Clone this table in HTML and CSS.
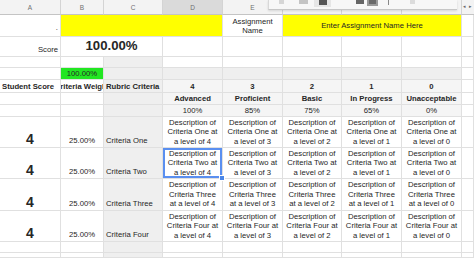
FILE: index.html
```html
<!DOCTYPE html>
<html>
<head>
<meta charset="utf-8">
<link rel="stylesheet" href="styles.css">
</head>
<body>
<div class="sheet">
  <!-- header row -->
  <div class="c hd">A</div>
  <div class="c hd">B</div>
  <div class="c hd">C</div>
  <div class="c hd sel">D</div>
  <div class="c hd">E</div>
  <div class="c hd">F</div>
  <div class="c hd">G</div>
  <div class="c hd">H</div>
  <div class="c hd arrows">◂ ▸</div>

  <!-- row 1 -->
  <div class="c rt mid dot">.</div>
  <div class="c yellow span3"></div>
  <div class="c ctr mid wrap two">Assignment Name</div>
  <div class="c yellow ctr mid span3">Enter Assignment Name Here</div>
  <div class="c"></div>

  <!-- row 2 -->
  <div class="c rt">Score</div>
  <div class="c ctr bold score span2">100.00%</div>
  <div class="c"></div>
  <div class="c"></div>
  <div class="c"></div>
  <div class="c"></div>
  <div class="c"></div>
  <div class="c"></div>

  <!-- row 3 -->
  <div class="c"></div>
  <div class="c"></div>
  <div class="c gray"></div>
  <div class="c"></div>
  <div class="c"></div>
  <div class="c"></div>
  <div class="c"></div>
  <div class="c"></div>
  <div class="c"></div>

  <!-- row 4 -->
  <div class="c"></div>
  <div class="c green ctr mid">100.00%</div>
  <div class="c gray"></div>
  <div class="c gray"></div>
  <div class="c gray"></div>
  <div class="c gray"></div>
  <div class="c gray"></div>
  <div class="c gray"></div>
  <div class="c"></div>

  <!-- row 5 -->
  <div class="c bold mid">Student Score</div>
  <div class="c bold mid ctr clip"><span>Criteria Weight</span></div>
  <div class="c bold mid gray">Rubric Criteria</div>
  <div class="c bold mid ctr light">4</div>
  <div class="c bold mid ctr light">3</div>
  <div class="c bold mid ctr light">2</div>
  <div class="c bold mid ctr light">1</div>
  <div class="c bold mid ctr light">0</div>
  <div class="c"></div>

  <!-- row 6 -->
  <div class="c"></div>
  <div class="c"></div>
  <div class="c gray"></div>
  <div class="c bold mid ctr light">Advanced</div>
  <div class="c bold mid ctr light">Proficient</div>
  <div class="c bold mid ctr light">Basic</div>
  <div class="c bold mid ctr light">In Progress</div>
  <div class="c bold mid ctr light">Unacceptable</div>
  <div class="c"></div>

  <!-- row 7 -->
  <div class="c"></div>
  <div class="c"></div>
  <div class="c gray"></div>
  <div class="c mid ctr light">100%</div>
  <div class="c mid ctr light">85%</div>
  <div class="c mid ctr light">75%</div>
  <div class="c mid ctr light">65%</div>
  <div class="c mid ctr light">0%</div>
  <div class="c"></div>

  <!-- row 8 -->
  <div class="c ctr big">4</div>
  <div class="c ctr">25.00%</div>
  <div class="c gray">Criteria One</div>
  <div class="c desc">Description of Criteria One at a level of 4</div>
  <div class="c desc">Description of Criteria One at a level of 3</div>
  <div class="c desc">Description of Criteria One at a level of 2</div>
  <div class="c desc">Description of Criteria One at a level of 1</div>
  <div class="c desc">Description of Criteria One at a level of 0</div>
  <div class="c"></div>

  <!-- row 9 -->
  <div class="c ctr big">4</div>
  <div class="c ctr">25.00%</div>
  <div class="c gray">Criteria Two</div>
  <div class="c desc active">Description of Criteria Two at a level of 4<span class="handle"></span></div>
  <div class="c desc">Description of Criteria Two at a level of 3</div>
  <div class="c desc">Description of Criteria Two at a level of 2</div>
  <div class="c desc">Description of Criteria Two at a level of 1</div>
  <div class="c desc">Description of Criteria Two at a level of 0</div>
  <div class="c"></div>

  <!-- row 10 -->
  <div class="c ctr big">4</div>
  <div class="c ctr">25.00%</div>
  <div class="c gray">Criteria Three</div>
  <div class="c desc">Description of Criteria Three at a level of 4</div>
  <div class="c desc">Description of Criteria Three at a level of 3</div>
  <div class="c desc">Description of Criteria Three at a level of 2</div>
  <div class="c desc">Description of Criteria Three at a level of 1</div>
  <div class="c desc">Description of Criteria Three at a level of 0</div>
  <div class="c"></div>

  <!-- row 11 -->
  <div class="c ctr big">4</div>
  <div class="c ctr">25.00%</div>
  <div class="c gray">Criteria Four</div>
  <div class="c desc">Description of Criteria Four at a level of 4</div>
  <div class="c desc">Description of Criteria Four at a level of 3</div>
  <div class="c desc">Description of Criteria Four at a level of 2</div>
  <div class="c desc">Description of Criteria Four at a level of 1</div>
  <div class="c desc">Description of Criteria Four at a level of 0</div>
  <div class="c"></div>

  <!-- row 12 -->
  <div class="c"></div>
  <div class="c"></div>
  <div class="c gray"></div>
  <div class="c"></div>
  <div class="c"></div>
  <div class="c"></div>
  <div class="c"></div>
  <div class="c"></div>
  <div class="c"></div>

  <!-- row 13 -->
  <div class="c"></div>
  <div class="c"></div>
  <div class="c gray"></div>
  <div class="c"></div>
  <div class="c"></div>
  <div class="c"></div>
  <div class="c"></div>
  <div class="c"></div>
  <div class="c"></div>

  <div class="toolbar">
    <svg width="188" height="9" viewBox="0 0 188 9">
      <rect x="10" y="0" width="5" height="4" fill="#d6d6d6"/>
      <rect x="30" y="0" width="9" height="4" fill="#c4c4c4"/>
      <rect x="45" y="0" width="17" height="7" fill="#e6e6e6"/>
      <rect x="50" y="0" width="8" height="5" fill="#555"/>
      <rect x="87" y="0" width="8" height="4" fill="#666"/>
      <rect x="98" y="0" width="11" height="6" fill="#9a9a9a"/>
      <rect x="100" y="0" width="7" height="4" fill="#6a6a6a"/>
      <rect x="119" y="0" width="1" height="5" fill="#888"/>
      <rect x="141" y="0" width="5" height="4" fill="#dcdcdc"/>
    </svg>
  </div>
</div>
</body>
</html>
```

FILE: styles.css
```css
html, body {
  margin: 0;
  padding: 0;
  background: #ffffff;
}

body {
  width: 474px;
  height: 258px;
  overflow: hidden;
}

.sheet {
  position: relative;
  display: grid;
  grid-template-columns: 61px 43px 59px 60px 60px 59px 60px 60px 12px;
  grid-template-rows: 15px 22px 20px 11px 12px 13px 12px 12px 31px 31px 32px 31px 11px 5px;
  width: 474px;
  height: 258px;
  overflow: hidden;
  font-family: "Liberation Sans", Arial, sans-serif;
  font-size: 7.7px;
  color: #262626;
}

.c {
  box-sizing: border-box;
  border-right: 1px solid #e0e0e0;
  border-bottom: 1px solid #e0e0e0;
  display: flex;
  align-items: flex-end;
  justify-content: flex-start;
  padding: 0 2px 2px 2px;
  overflow: hidden;
  white-space: nowrap;
  line-height: 9px;
}

.hd {
  background: #f3f3f3;
  color: #707070;
  font-size: 6.5px;
  justify-content: center;
  align-items: center;
  padding: 0;
  border-right: 1px solid #d4d4d4;
  border-bottom: 1px solid #c4c4c4;
}

.hd.sel {
  background: #dadada;
}

.arrows {
  justify-content: flex-start;
  padding-left: 1px;
  font-size: 5px;
  letter-spacing: 1px;
  color: #666;
  padding-bottom: 2px;
  border-right: none;
}

.ctr { justify-content: center; }
.rt { justify-content: flex-end; }
.mid { align-items: center; padding-bottom: 0; }
.bold { font-weight: bold; }
.dot { padding-top: 3px; }

.span2 { grid-column: span 2; }
.span3 { grid-column: span 3; }

.yellow { background: #ffff00; }
.gray { background: #efefef; }
.light { background: #f5f5f5; }
.green { background: #22e622; }

.two {
  white-space: normal;
  text-align: center;
  line-height: 9px;
}

.score {
  font-size: 13.2px;
  line-height: 14px;
  padding-bottom: 3px;
}

.clip span {
  flex: none;
}

.big {
  font-size: 14px;
  font-weight: bold;
  line-height: 14px;
  padding-bottom: 1px;
}

.desc {
  white-space: normal;
  text-align: center;
  justify-content: center;
  align-items: center;
  line-height: 9.6px;
  padding: 0 2px;
}

.active {
  position: relative;
  box-shadow: inset 0 0 0 2px #5a8ff0;
  overflow: visible;
}

.handle {
  position: absolute;
  right: -3px;
  bottom: -3px;
  width: 4px;
  height: 4px;
  background: #4a86e8;
  border: 1px solid #ffffff;
  z-index: 2;
}

.toolbar {
  position: absolute;
  top: 0;
  left: 268px;
  width: 188px;
  height: 9px;
  background: #f7f7f7;
  border-bottom: 1px solid #c6c6c6;
  border-left: 1px solid #d8d8d8;
  box-shadow: 0 1px 2px rgba(0, 0, 0, 0.12);
  z-index: 3;
}

.toolbar svg {
  display: block;
}
```
